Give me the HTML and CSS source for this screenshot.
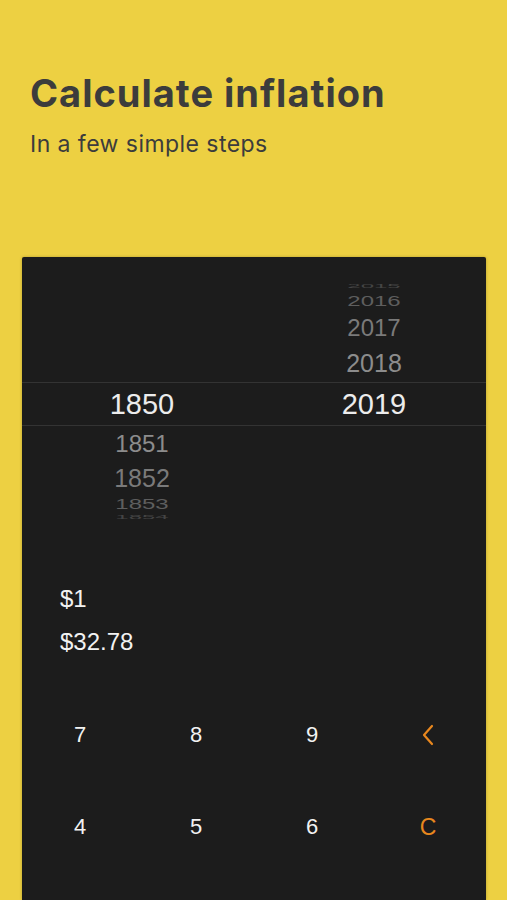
FILE: index.html
```html
<!DOCTYPE html>
<html>
<head>
<meta charset="utf-8">
<link rel="stylesheet" href="styles.css">
</head>
<body>
<div class="page">
  <header class="hero">
    <h1 class="title">Calculate inflation</h1>
    <p class="subtitle">In a few simple steps</p>
  </header>
  <section class="card">
    <div class="picker">
      <div class="wheel-above">
        <div class="col"></div>
        <div class="col col-up">
          <div class="row r4">2015</div>
          <div class="row r3">2016</div>
          <div class="row r2">2017</div>
          <div class="row r1">2018</div>
        </div>
      </div>
      <div class="band">
        <div class="sel">1850</div>
        <div class="sel">2019</div>
      </div>
      <div class="wheel-below">
        <div class="col col-down">
          <div class="row r1">1851</div>
          <div class="row r2">1852</div>
          <div class="row r3">1853</div>
          <div class="row r4">1854</div>
        </div>
        <div class="col"></div>
      </div>
    </div>
    <div class="values">
      <div class="value">$1</div>
      <div class="value">$32.78</div>
    </div>
    <div class="keypad">
      <div class="key">7</div>
      <div class="key">8</div>
      <div class="key">9</div>
      <div class="key accent"><svg width="14" height="22" viewBox="0 0 14 22"><path d="M11 2 L3 11 L11 20" fill="none" stroke="#e8871e" stroke-width="2.2" stroke-linecap="round" stroke-linejoin="round"/></svg></div>
      <div class="key">4</div>
      <div class="key">5</div>
      <div class="key">6</div>
      <div class="key accent">C</div>
    </div>
  </section>
</div>
</body>
</html>
```
FILE: styles.css
```css
* { box-sizing: border-box; }
html, body { margin: 0; padding: 0; }
body {
  background: #edd042;
  font-family: "Liberation Sans", Arial, sans-serif;
  width: 507px;
  height: 900px;
  overflow: hidden;
}
.page {
  display: flex;
  flex-direction: column;
  height: 900px;
}
.hero {
  padding: 70px 0 0 30px;
  height: 257px;
}
.title {
  margin: 0;
  font-family: Inter, "Open Sans", sans-serif;
  font-weight: 700;
  font-size: 38px;
  line-height: 46px;
  color: #3c3c3c;
  letter-spacing: 1px;
}
.subtitle {
  margin: 14px 0 0 0;
  font-family: Inter, "Open Sans", sans-serif;
  font-size: 23px;
  line-height: 28px;
  color: #3c3c3c;
  letter-spacing: 0.45px;
}
.card {
  flex: 1;
  margin: 0 21px 0 22px;
  background: #1c1c1c;
  border-radius: 2px 2px 0 0;
  box-shadow: 0 0 3px rgba(0,0,0,0.25);
  display: flex;
  flex-direction: column;
}
.picker { display: flex; flex-direction: column; }
.wheel-above, .wheel-below {
  display: grid;
  grid-template-columns: 240px 1fr;
}
.wheel-above { height: 125px; }
.wheel-below { height: 100px; }
.col { display: flex; flex-direction: column; align-items: center; }
.col-up { justify-content: flex-end; }
.col-down { justify-content: flex-start; }
.row {
  display: flex;
  align-items: center;
  justify-content: center;
  font-size: 24px;
  color: #7c7c7c;
}
.col-up .r1 { height: 38px; font-size: 25px; color: #8c8c8c; }
.col-up .r2 { height: 32px; font-size: 24px; color: #7a7a7a; }
.col-up .r3 { height: 22px; font-size: 24px; color: #5e5e5e; transform: scaleY(0.62); }
.col-up .r4 { height: 8px; font-size: 24px; color: #444; transform: scaleY(0.25); }
.col-down .r1 { height: 36px; font-size: 24px; color: #8c8c8c; }
.col-down .r2 { height: 33px; font-size: 25px; color: #7a7a7a; }
.col-down .r3 { height: 17px; font-size: 24px; color: #5e5e5e; transform: scaleY(0.62); }
.col-down .r4 { height: 10px; font-size: 24px; color: #444; transform: scaleY(0.25); }
.band {
  display: grid;
  grid-template-columns: 240px 1fr;
  height: 44px;
  border-top: 1px solid #333;
  border-bottom: 1px solid #333;
}
.sel {
  display: flex;
  align-items: center;
  justify-content: center;
  font-size: 29px;
  color: #ececec;
}
.values {
  padding: 60px 0 0 38px;
  display: flex;
  flex-direction: column;
  gap: 17px;
}
.value {
  font-size: 24px;
  line-height: 26px;
  color: #f2f2f2;
}
.keypad {
  margin-top: 61px;
  display: grid;
  grid-template-columns: repeat(4, 1fr);
  grid-auto-rows: 92px;
}
.key {
  display: flex;
  justify-content: center;
  align-items: flex-start;
  padding-top: 4px;
  font-size: 22px;
  line-height: 30px;
  color: #f2f2f2;
}
.key svg { margin-top: 4px; }
.accent { color: #e8871e; font-size: 23px; }
```
